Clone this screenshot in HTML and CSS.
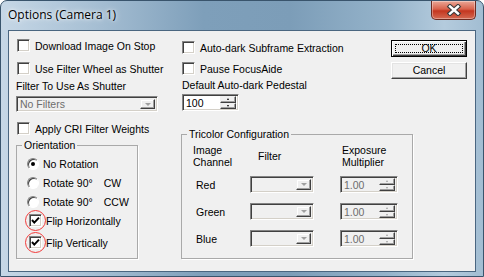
FILE: index.html
```html
<!DOCTYPE html>
<html lang="en">
<head>
  <meta charset="UTF-8">
  <title>Options (Camera 1)</title>
  <link rel="stylesheet" href="styles.css">
</head>
<body>

<div class="window">
  <div class="titlebar">
    <span class="title">Options (Camera 1)</span>
    <div class="close">
      <svg width="16" height="12" viewBox="0 0 16 12">
        <path d="M4 2.5 L12 9.5 M12 2.5 L4 9.5" stroke="#3b3b3b" stroke-width="4.6" stroke-linecap="square"/>
        <path d="M4 2.5 L12 9.5 M12 2.5 L4 9.5" stroke="#fff" stroke-width="2.4" stroke-linecap="square"/>
      </svg>
    </div>
  </div>

  <div class="client">
    <!-- left column -->
    <div class="col-left">
      <label class="check"><span class="box"></span>Download Image On Stop</label>
      <label class="check next"><span class="box"></span>Use Filter Wheel as Shutter</label>
      <div class="caption">Filter To Use As Shutter</div>
      <div class="combo shutter">
        <span class="combo-text">No Filters</span>
        <span class="drop"><i class="arrow"></i></span>
      </div>
      <label class="check cri"><span class="box"></span>Apply CRI Filter Weights</label>

      <div class="group orient">
        <span class="legend">Orientation</span>
        <label class="radio"><span class="rdot on"></span>No Rotation</label>
        <label class="radio"><span class="rdot"></span>Rotate 90°<span class="dir">CW</span></label>
        <label class="radio"><span class="rdot"></span>Rotate 90°<span class="dir">CCW</span></label>
        <label class="flip"><span class="box checked"><svg width="11" height="11" viewBox="0 0 11 11"><path d="M2 5 L4.3 7.6 L9 2.6" fill="none" stroke="#000" stroke-width="2"/></svg></span>Flip Horizontally</label>
        <label class="flip second"><span class="box checked"><svg width="11" height="11" viewBox="0 0 11 11"><path d="M2 5 L4.3 7.6 L9 2.6" fill="none" stroke="#000" stroke-width="2"/></svg></span>Flip Vertically</label>
      </div>
    </div>

    <!-- right column -->
    <div class="col-right">
      <div class="top">
        <div class="opts">
          <label class="check"><span class="box"></span>Auto-dark Subframe Extraction</label>
          <label class="check pause"><span class="box"></span>Pause FocusAide</label>
          <div class="caption pedestal">Default Auto-dark Pedestal</div>
          <div class="spin pedestal-spin">
            <span class="spin-text">100</span>
            <span class="spin-btns"><span class="sb"><i class="up"></i></span><span class="sb"><i class="down"></i></span></span>
          </div>
        </div>
        <div class="buttons">
          <div class="btn default">OK</div>
          <div class="btn">Cancel</div>
        </div>
      </div>

      <div class="group tricolor">
        <span class="legend">Tricolor Configuration</span>
        <div class="tc-head">
          <div class="c1">Image<br>Channel</div>
          <div class="c2 head-filter">Filter</div>
          <div class="c3 head-exp">Exposure<br>Multiplier</div>
        </div>
        <div class="tc-row">
          <div class="c1 chan">Red</div>
          <div class="c2"><div class="combo small"><span class="combo-text"></span><span class="drop"><i class="arrow"></i></span></div></div>
          <div class="c3"><div class="spin off"><span class="spin-text">1.00</span><span class="spin-btns"><span class="sb"><i class="up"></i></span><span class="sb"><i class="down"></i></span></span></div></div>
        </div>
        <div class="tc-row">
          <div class="c1 chan">Green</div>
          <div class="c2"><div class="combo small"><span class="combo-text"></span><span class="drop"><i class="arrow"></i></span></div></div>
          <div class="c3"><div class="spin off"><span class="spin-text">1.00</span><span class="spin-btns"><span class="sb"><i class="up"></i></span><span class="sb"><i class="down"></i></span></span></div></div>
        </div>
        <div class="tc-row">
          <div class="c1 chan">Blue</div>
          <div class="c2"><div class="combo small"><span class="combo-text"></span><span class="drop"><i class="arrow"></i></span></div></div>
          <div class="c3"><div class="spin off"><span class="spin-text">1.00</span><span class="spin-btns"><span class="sb"><i class="up"></i></span><span class="sb"><i class="down"></i></span></span></div></div>
        </div>
      </div>
    </div>
  </div>
</div>

</body>
</html>
```

FILE: styles.css
```css
/* General */
body {
  margin: 0;
  background: #fff;
  font-family: "Liberation Sans", Arial, sans-serif;
  font-size: 10.5px;
  color: #000;
}

/* Window frame */
.window {
  width: 484px;
  height: 277px;
  box-sizing: border-box;
  border: 1px solid #39546c;
  border-radius: 7px 7px 0 0;
  background: linear-gradient(90deg, #c6d7e6 0%, #a9c1d5 18%, #7e9fba 42%, #7c9db8 60%, #95b3ca 80%, #b4cbdd 92%, #a2bdd2 100%);
  display: flex;
  flex-direction: column;
  overflow: hidden;
}

.titlebar {
  height: 29px;
  flex: none;
  display: flex;
  align-items: flex-start;
  padding-left: 7px;
}

.title {
  font-family: "Open Sans", "Noto Sans", sans-serif;
  font-size: 12px;
  line-height: 16px;
  margin-top: 6px;
  text-shadow: 0 0 6px #fff, 0 0 3px rgba(255, 255, 255, 0.8);
}

.close {
  margin-left: auto;
  margin-right: 7px;
  width: 45px;
  height: 19px;
  box-sizing: border-box;
  border: 1px solid #6d2a20;
  border-top: none;
  border-radius: 0 0 5px 5px;
  background: linear-gradient(#eaa797, #d8624c 45%, #c4361f 55%, #d46a52);
  box-shadow: inset 0 0 0 1px rgba(255, 255, 255, 0.35);
  display: flex;
  align-items: center;
  justify-content: center;
}

.client {
  flex: none;
  height: 242px;
  box-sizing: border-box;
  margin: 0 7px;
  border: 1px solid #4a6680;
  background: #f0f0f0;
  display: flex;
}

/* Columns */
.col-left {
  width: 142px;
  padding: 8px 0 0 7px;
  display: flex;
  flex-direction: column;
}

.col-right {
  margin-left: 23px;
  width: 294px;
  display: flex;
  flex-direction: column;
}

.top {
  display: flex;
}

.opts {
  padding: 10px 0 0 1px;
  display: flex;
  flex-direction: column;
}

/* Checkboxes */
.check,
.flip {
  display: flex;
  align-items: center;
  height: 13px;
  white-space: nowrap;
}

.col-left .check {
  margin-left: 1px;
}

.check.next {
  margin-top: 10px;
}

.check.cri {
  margin-top: 10px;
}

.check.pause {
  margin-top: 8px;
}

.box {
  position: relative;
  flex: none;
  width: 13px;
  height: 13px;
  box-sizing: border-box;
  margin-right: 5px;
  border: 1px solid;
  border-color: #848484 #fff #fff #848484;
  box-shadow: inset 1px 1px 0 #404040, inset -1px -1px 0 #d4d0c8;
  background: #fff;
}

.box svg {
  display: block;
}

/* red marker circles */
.box.checked::after {
  content: "";
  position: absolute;
  left: -5px;
  top: -5px;
  width: 21px;
  height: 21px;
  box-sizing: border-box;
  border: 1.5px solid #f23a3a;
  border-radius: 50%;
}

.caption {
  height: 12px;
  line-height: 12px;
  margin-top: 5px;
  white-space: nowrap;
}

.caption.pedestal {
  margin-top: 4px;
}

/* Sunken fields */
.combo,
.spin {
  display: flex;
  align-items: center;
  box-sizing: border-box;
  height: 17px;
  padding: 2px;
  border: 1px solid;
  border-color: #848484 #fff #fff #848484;
  box-shadow: inset 1px 1px 0 #404040, inset -1px -1px 0 #d4d0c8;
  background: #f0f0f0;
  color: #6d6d6d;
}

.combo.shutter {
  margin-top: 4px;
  height: 16px;
}

.combo.small {
  width: 64px;
}

.combo-text,
.spin-text {
  flex: 1;
  padding-left: 1px;
  white-space: nowrap;
}

.drop {
  width: 15px;
  height: 100%;
  box-sizing: border-box;
  border: 1px solid;
  border-color: #f0f0f0 #404040 #404040 #f0f0f0;
  box-shadow: inset -1px -1px 0 #a0a0a0, inset 1px 1px 0 #fff;
  background: #f0f0f0;
  display: flex;
  align-items: center;
  justify-content: center;
}

.arrow {
  width: 0;
  height: 0;
  border-left: 3px solid transparent;
  border-right: 3px solid transparent;
  border-top: 3px solid #a0a0a0;
}

.spin {
  width: 58px;
}

.spin.pedestal-spin {
  margin-top: 3px;
  width: 57px;
  background: #fff;
  color: #000;
}

.spin-btns {
  width: 16px;
  height: 13px;
  display: flex;
  flex-direction: column;
}

.sb {
  flex: 1;
  box-sizing: border-box;
  border: 1px solid;
  border-color: #f0f0f0 #404040 #404040 #f0f0f0;
  box-shadow: inset -1px -1px 0 #a0a0a0;
  background: #f0f0f0;
  display: flex;
  align-items: center;
  justify-content: center;
}

.up,
.down {
  width: 0;
  height: 0;
  border-left: 1.5px solid transparent;
  border-right: 1.5px solid transparent;
}

.up {
  border-bottom: 2px solid #000;
}

.down {
  border-top: 2px solid #000;
}

.spin.off .up {
  border-bottom-color: #a0a0a0;
}

.spin.off .down {
  border-top-color: #a0a0a0;
}

/* Buttons */
.buttons {
  margin-left: auto;
  margin-right: 8px;
  padding-top: 9px;
  display: flex;
  flex-direction: column;
  gap: 5px;
}

.btn {
  position: relative;
  width: 76px;
  height: 17px;
  box-sizing: border-box;
  border: 1px solid;
  border-color: #fff #404040 #404040 #fff;
  box-shadow: inset -1px -1px 0 #a0a0a0, inset 1px 1px 0 #e3e3e3;
  background: #f0f0f0;
  text-align: center;
  line-height: 15px;
}

.btn.default {
  border-color: #000;
  box-shadow: inset 1px 1px 0 #fff, inset -1px -1px 0 #404040, inset -2px -2px 0 #a0a0a0;
}

.btn.default::after {
  content: "";
  position: absolute;
  left: 3px;
  top: 3px;
  right: 3px;
  bottom: 3px;
  border: 1px dotted #000;
}

/* Group boxes */
.group {
  position: relative;
  box-sizing: border-box;
  border: 1px solid #a9a9a9;
  box-shadow: 1px 1px 0 #fff;
}

.legend {
  position: absolute;
  left: 5px;
  top: -7px;
  height: 12px;
  line-height: 12px;
  padding: 0 2px;
  background: #f0f0f0;
  white-space: nowrap;
}

.orient {
  margin-top: 10px;
  width: 122px;
  height: 114px;
  padding-top: 11px;
  display: flex;
  flex-direction: column;
  gap: 6px;
}

.radio {
  display: flex;
  align-items: center;
  height: 13px;
  padding-left: 10px;
  white-space: nowrap;
}

.rdot {
  flex: none;
  width: 12px;
  height: 12px;
  box-sizing: border-box;
  margin-right: 4px;
  border-radius: 50%;
  border: 1px solid;
  border-color: #848484 #fff #fff #848484;
  box-shadow: inset 1px 1px 0 #404040;
  background: #fff;
  display: flex;
  align-items: center;
  justify-content: center;
}

.rdot.on::after {
  content: "";
  width: 4px;
  height: 4px;
  border-radius: 50%;
  background: #000;
}

.dir {
  margin-left: 11px;
}

.flip {
  padding-left: 12px;
}

.flip .box {
  margin-right: 4px;
}

.flip.second {
  margin-top: 3px;
}

.tricolor {
  margin-top: 23px;
  width: 232px;
  height: 125px;
  padding: 9px 0 0 11px;
}

.tc-head {
  display: flex;
  align-items: center;
  height: 24px;
  line-height: 12px;
  margin-bottom: -2px;
}

.tc-row {
  display: flex;
  align-items: center;
  height: 17px;
  margin-top: 10px;
}

.c1 {
  width: 57px;
  flex: none;
}

.c2 {
  width: 90px;
  flex: none;
}

.c3 {
  width: 58px;
  flex: none;
}

.head-filter {
  padding-left: 8px;
  box-sizing: border-box;
}

.head-exp {
  padding-left: 2px;
  box-sizing: border-box;
  white-space: nowrap;
}

.chan {
  padding-left: 3px;
  box-sizing: border-box;
}
```
